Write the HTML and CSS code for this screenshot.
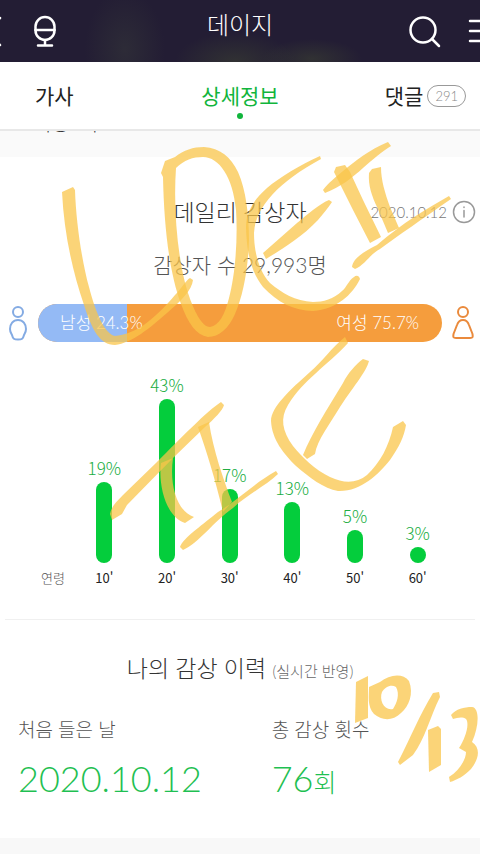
FILE: index.html
```html
<!DOCTYPE html>
<html lang="ko">
<head>
  <meta charset="UTF-8">
  <meta name="viewport" content="width=device-width, initial-scale=1.0">
  <title>데이지</title>
  <link rel="stylesheet" href="styles.css">
</head>
<body>
  <div class="page">
    <header class="topbar">
      <div class="topbar-left">
        <button class="icon-button" aria-label="뒤로">
          <svg width="20" height="50" viewBox="0 0 20 50"><path d="M0 12 L-13 25 L0 39"/></svg>
        </button>
        <button class="icon-button" aria-label="음성 검색">
          <svg width="26" height="50" viewBox="0 0 26 50"><rect x="3.500" y="11" width="19" height="23" rx="9.500"/><path d="M3.500 24H22.500M13 34V39M6 39.500H20"/></svg>
        </button>
      </div>
      <h1>데이지</h1>
      <div class="topbar-right">
        <button class="icon-button" aria-label="검색">
          <svg width="34" height="50" viewBox="0 0 34 50"><circle cx="15" cy="24" r="12.500"/><path d="M24 33L31 40"/></svg>
        </button>
        <button class="icon-button" aria-label="메뉴">
          <svg width="14" height="50" viewBox="0 0 14 50"><path d="M4 15H24M4 25H24M4 35H24"/></svg>
        </button>
      </div>
    </header>

    <nav class="tabs">
      <a href="#lyrics" class="tab">가사</a>
      <a href="#detail" class="tab tab-active">상세정보</a>
      <a href="#comments" class="tab tab-comments">댓글<span class="badge">291</span></a>
    </nav>

    <!-- Tail of the previous row, scrolled under the tabs -->
    <div class="scrolled"><span>저장</span><span>이</span></div>

    <main>
      <section class="daily" id="detail">
        <div class="daily-head">
          <h2>데일리 감상자</h2>
          <div class="daily-date">
            <time>2020.10.12</time>
            <button class="icon-button info" aria-label="안내">
              <svg width="24" height="24" viewBox="0 0 24 24"><circle cx="12" cy="12" r="10.500"/><path d="M12 10.500V17M12 7V7.500"/></svg>
            </button>
          </div>
        </div>
        <p class="count">감상자 수 29,993명</p>

        <div class="gender">
          <svg class="male" width="20" height="38" viewBox="0 0 20 38"><circle cx="10" cy="8" r="5"/><path d="M10 16C5 16 2 20 2 25C2 28 3 29 4 31C5 35 6 35.500 10 35.500S15 35 16 31C17 29 18 28 18 25C18 20 15 16 10 16Z"/></svg>
          <div class="gender-bar">
            <div class="gender-male" style="width: 22%"><span>남성 24.3%</span></div>
            <div class="gender-female"><span>여성 75.7%</span></div>
          </div>
          <svg class="female" width="22" height="38" viewBox="0 0 22 38"><circle cx="11" cy="8" r="5"/><path d="M11 16C7.500 16 6 18 5 21L1.500 30C1 33 1 34 4 34H18C21 34 21 33 20.500 30L17 21C16 18 14.500 16 11 16Z"/></svg>
        </div>

        <div class="chart">
          <span class="axis-title">연령</span>
          <div class="col"><span class="pct">19%</span><div class="bar" style="height: 81px"></div><span class="age">10'</span></div>
          <div class="col"><span class="pct">43%</span><div class="bar" style="height: 164px"></div><span class="age">20'</span></div>
          <div class="col"><span class="pct">17%</span><div class="bar" style="height: 74px"></div><span class="age">30'</span></div>
          <div class="col"><span class="pct">13%</span><div class="bar" style="height: 61px"></div><span class="age">40'</span></div>
          <div class="col"><span class="pct">5%</span><div class="bar" style="height: 33px"></div><span class="age">50'</span></div>
          <div class="col"><span class="pct">3%</span><div class="bar" style="height: 16px"></div><span class="age">60'</span></div>
        </div>
      </section>

      <section class="history">
        <h2>나의 감상 이력 <small>(실시간 반영)</small></h2>
        <dl class="stats">
          <div>
            <dt>처음 들은 날</dt>
            <dd>2020.10.12</dd>
          </div>
          <div>
            <dt>총 감상 횟수</dt>
            <dd>76<span class="unit">회</span></dd>
          </div>
        </dl>
      </section>
    </main>

    <!-- Marker pen drawing over the page -->
    <svg class="ink" viewBox="0 0 480 854" aria-hidden="true">
      <path d="M62 192L73 187 75 190C76 222 82 262 89 287C96 314 105 334 115 336C135 334 152 322 175 295C181 289 186 280 190 278L193 280C192 290 181 301 167 313C150 328 132 343 115 345C100 345 92 330 84 305C72 270 64 232 62 192Z"/>
      <path fill-rule="evenodd" d="M161 173L165 161 175 157C184 150 193 147 204 147C220 148 231 157 238 172C246 190 249 215 249 240C248 270 243 296 235 314C229 328 219 337 208 337C196 335 188 323 181 304C169 272 164 225 163 177ZM176 168C173 210 178 262 188 293C194 311 202 327 210 327C219 326 225 314 229 298C235 276 238 240 236 210C233 177 219 157 203 157C193 157 184 160 176 168Z"/>
      <path d="M320 156C300 165 280 177 267 188C251 202 246 215 246 228C247 252 250 270 263 287C277 302 294 311 313 311C337 309 352 295 360 279C359 275 356 275 354 277C348 281 347 287 342 291C334 299 323 302 313 302C295 301 282 293 270 283C258 270 254 250 254 233C255 207 280 181 321 159Z"/>
      <path d="M329 200C319 204 307 215 297 223L263 253 266 259C282 249 301 238 318 220C322 215 328 208 332 202Z"/>
      <path d="M388 142C370 149 354 162 343 171C336 177 328 183 323 190L325 193C341 187 353 177 363 168C373 159 383 151 391 146Z"/>
      <path d="M334 172L336 167 345 165 350 172L363 200 381 237 370 243 353 210Z"/>
      <path d="M369 173L372 169 381 167C381 180 385 193 390 207L399 228 388 233 377 207C372 196 368 186 369 173Z"/>
      <path d="M449 196C426 209 404 222 377 245C365 251 353 258 352 267L355 269C365 265 370 254 380 249C399 235 421 220 451 199Z"/>
      <path d="M221 402C207 411 181 438 157 462L123 495C117 501 111 507 110 514L112 520 122 514 127 505 173 458 205 427C214 419 223 410 224 405Z"/>
      <path d="M161 463L173 458C169 487 178 512 194 517L185 523C166 517 158 485 161 463Z"/>
      <path d="M198 427L209 422C213 450 224 481 232 502L223 512C215 478 207 453 198 427Z"/>
      <path d="M276 471C253 484 238 500 218 512C205 523 183 538 180 547L183 550C199 543 213 522 233 508C248 494 267 485 278 474Z"/>
      <path d="M345 337C331 348 322 362 310 372C291 389 271 407 271 421C272 440 284 454 296 466C309 477 324 489 338 491C360 492 378 475 390 460C399 447 404 437 406 425L403 421 393 427C389 446 380 463 367 475C357 483 345 484 330 477C315 470 302 457 293 446C282 431 280 418 288 405C304 379 327 366 348 343Z"/>
      <path d="M363 359L369 361C366 372 356 383 340 407C330 424 317 440 315 454L307 459 303 455C312 433 326 411 343 383C348 373 356 364 363 359Z"/>
      <path d="M356 682L368 676 368 718 355 723Z"/>
      <path fill-rule="evenodd" d="M369 687L380 682C390 674 403 673 409 681C414 694 409 706 401 713C392 722 381 720 374 714C367 706 369 696 369 687ZM382 692C385 687 391 684 396 687C400 694 397 703 393 709C384 711 379 700 382 692Z"/>
      <path d="M433 693L439 692 440 697C430 717 425 739 413 755L400 765 398 762C412 735 419 716 433 693Z"/>
      <path d="M428 730L438 726 441 729 441 765 429 772Z"/>
      <path d="M451 715C456 709 464 707 472 707C480 708 479 727 472 742C481 748 479 759 471 769C464 776 457 780 450 782L449 777C460 770 466 759 466 752L459 748C465 739 470 724 466 719C462 716 457 718 453 719Z"/>
    </svg>
  </div>
</body>
</html>
```

FILE: styles.css
```css
* {
  box-sizing: border-box;
}
body {
  margin: 0;
  background-color: #f8f8f8;
  color: #333;
  font-family: Lato, 'Noto Sans CJK KR', sans-serif;
  font-weight: 300;
}
h1, h2, p, dl, dd {
  margin: 0;
  font-weight: 300;
}
.page {
  position: relative;
  overflow: hidden;
}
.icon-button {
  display: block;
  padding: 0;
  border: none;
  background: none;
  cursor: pointer;
}
svg {
  display: block;
  fill: none;
  stroke-linecap: round;
  stroke-linejoin: round;
}

/* Header */
.topbar {
  display: grid;
  grid-template-columns: 1fr auto 1fr;
  height: 62px;
  color: white;
  background:
    radial-gradient(ellipse 60px 30px at 49% 100%, rgba(70, 80, 50, 0.4), transparent),
    radial-gradient(ellipse 50px 20px at 65% 95%, rgba(70, 80, 50, 0.4), transparent),
    radial-gradient(ellipse 40px 60px at 26% 80%, rgba(60, 65, 60, 0.4), transparent),
    #231d34;
}
.topbar h1 {
  font-size: 24px;
  line-height: 50px;
}
.topbar svg {
  stroke: white;
  stroke-width: 2.5;
}
.topbar-left {
  display: flex;
  gap: 12px;
}
.topbar-right {
  display: flex;
  justify-content: flex-end;
  gap: 24px;
}

/* Tabs */
.tabs {
  display: grid;
  grid-template-columns: 1fr auto 1fr;
  height: 69px;
  padding: 0 14px;
  background-color: white;
  border-bottom: 2px solid #e8e8e8;
}
.tab {
  padding-left: 21px;
  color: #222;
  font-size: 21px;
  font-weight: 400;
  line-height: 68px;
  text-decoration: none;
}
.tab-active {
  position: relative;
  padding-left: 0;
  color: #11b53c;
}
.tab-active::after {
  content: '';
  position: absolute;
  left: 50%;
  top: 51px;
  width: 6px;
  height: 6px;
  margin-left: -3px;
  border-radius: 50%;
  background-color: #11b53c;
}
.tab-comments {
  display: flex;
  align-items: center;
  justify-content: flex-end;
  gap: 4px;
}
.badge {
  padding: 0 7px;
  border: 1px solid #999;
  border-radius: 11px;
  color: #888;
  font-size: 13px;
  font-weight: 300;
  line-height: 20px;
}
.scrolled {
  display: flex;
  align-items: flex-start;
  gap: 10px;
  height: 26px;
  padding-left: 33px;
  overflow: hidden;
  background-color: #fafafa;
}
.scrolled span {
  margin-top: -18px;
  font-size: 20px;
  line-height: 20px;
}

/* Daily listeners */
.daily {
  padding: 39px 0 31px;
  background-color: white;
}
.daily-head {
  display: grid;
  grid-template-columns: 1fr auto 1fr;
  align-items: center;
  padding: 0 4px;
}
.daily-head h2 {
  grid-column: 2;
  font-size: 23px;
  line-height: 32px;
}
.daily-date {
  display: flex;
  align-items: center;
  justify-content: flex-end;
  gap: 5px;
  color: #777;
  font-size: 15px;
}
.info svg {
  stroke: #999;
  stroke-width: 1.5;
}
.count {
  margin-top: 21px;
  color: #555;
  font-size: 21px;
  line-height: 32px;
  text-align: center;
}
.gender {
  display: flex;
  gap: 10px;
  margin-top: 23px;
  padding: 0 6px 0 8px;
}
.gender svg {
  flex: none;
  stroke-width: 2;
}
.male {
  stroke: #84abe3;
}
.female {
  stroke: #ea8a3c;
}
.gender-bar {
  display: flex;
  flex: 1;
  height: 38px;
  border-radius: 19px;
  overflow: hidden;
  background-color: #f59d3d;
  color: white;
  font-size: 17px;
  line-height: 38px;
  white-space: nowrap;
}
.gender-male {
  padding-left: 22px;
  background-color: #94baf5;
}
.gender-female {
  flex: 1;
  padding-right: 23px;
  text-align: right;
}

/* Age chart */
.chart {
  display: grid;
  grid-template-columns: 73px repeat(6, 1fr);
  align-items: end;
  margin-top: 33px;
  padding-right: 31px;
}
.axis-title {
  padding-left: 41px;
  color: #555;
  font-size: 13px;
  line-height: 20px;
}
.col {
  display: flex;
  flex-direction: column;
  align-items: center;
}
.pct {
  margin-bottom: 4px;
  color: #20ad42;
  font-family: 'Noto Sans CJK KR', sans-serif;
  font-size: 17px;
  line-height: 20px;
}
.bar {
  width: 16px;
  border-radius: 8px;
  background-color: #04cd3c;
}
.age {
  margin-top: 5px;
  color: #222;
  font-family: 'Noto Sans CJK KR', sans-serif;
  font-size: 13px;
  font-weight: 400;
  line-height: 20px;
}

/* My history */
.history {
  padding: 0 5px 38px;
  background-color: white;
}
.history h2 {
  padding-top: 32px;
  border-top: 1px solid #f0f0f0;
  font-size: 23px;
  line-height: 32px;
  text-align: center;
}
.history small {
  color: #666;
  font-size: 15px;
}
.stats {
  display: grid;
  grid-template-columns: 4fr 3fr;
  margin-top: 31px;
  padding: 0 13px;
}
.stats dt {
  color: #555;
  font-size: 19px;
  line-height: 24px;
}
.stats dd {
  margin-top: 14px;
  color: #1fc052;
  font-size: 36px;
  line-height: 44px;
}
.unit {
  font-size: 25px;
  line-height: 24px;
}

.ink {
  position: absolute;
  left: 0;
  top: 0;
  width: 100%;
  pointer-events: none;
}
.ink path {
  fill: #fac549;
  fill-opacity: 0.74;
}
```
